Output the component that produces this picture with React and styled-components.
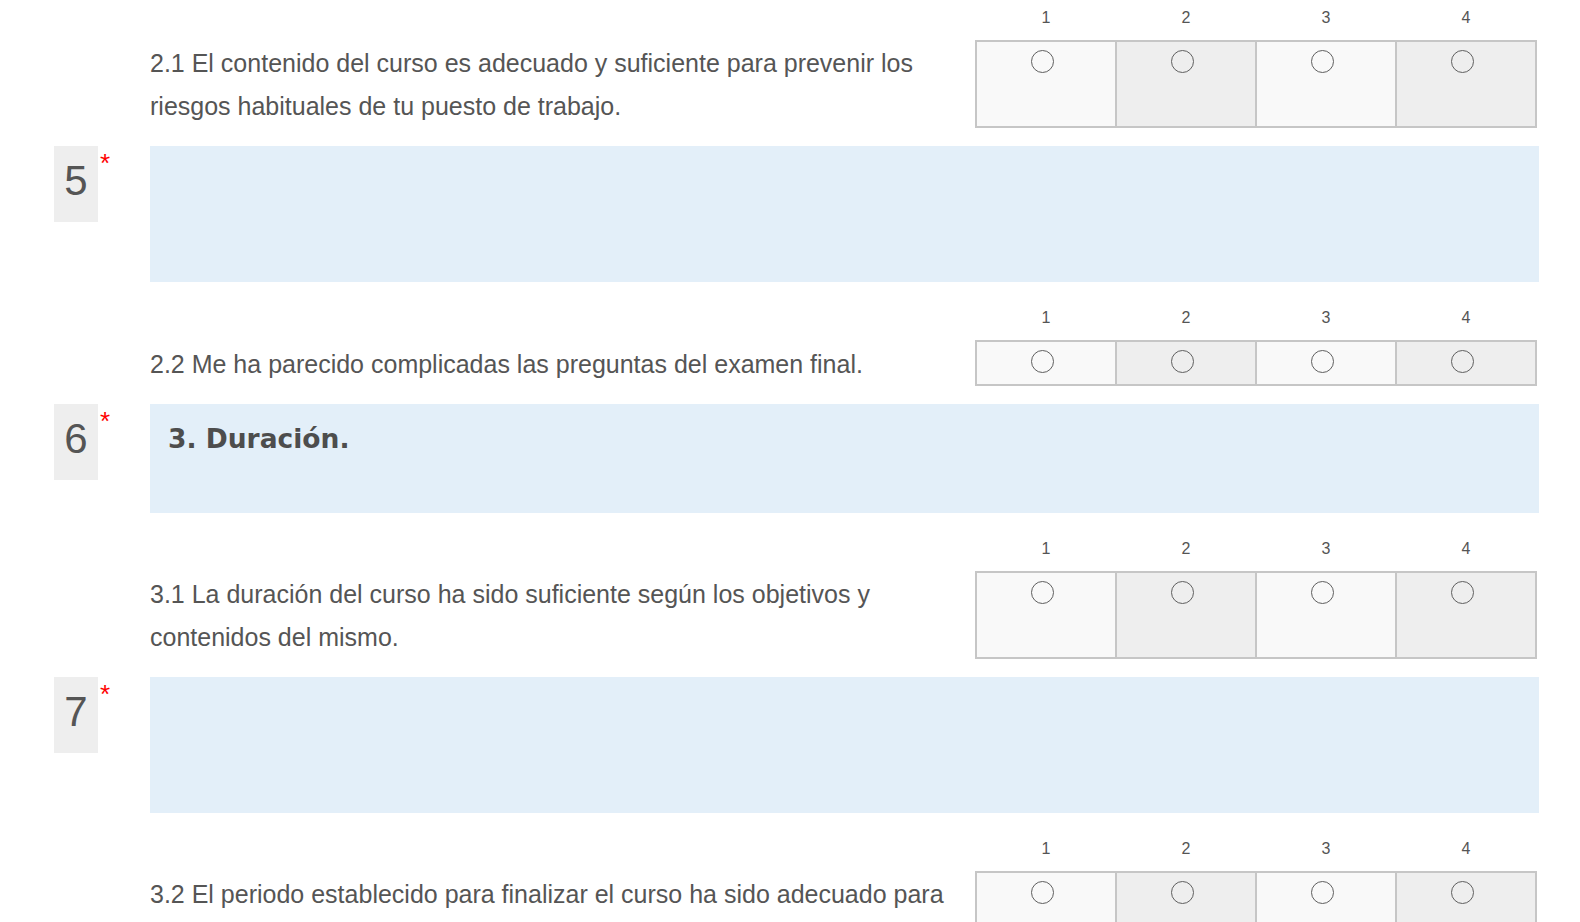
import React from "react";
import styled, { createGlobalStyle } from "styled-components";

const GlobalStyle = createGlobalStyle`
  html, body {
    margin: 0;
    padding: 0;
    background: #ffffff;
    font-family: "Liberation Sans", Arial, sans-serif;
    color: #555555;
  }
`;

const Page = styled.div`
  display: flex;
  flex-direction: column;
  gap: 18px;
  padding-left: 54px;
  width: 1580px;
  height: 922px;
  overflow: hidden;
  box-sizing: border-box;
`;

const Question = styled.div`
  display: flex;
  align-items: flex-start;
`;

const NumberCol = styled.div`
  display: flex;
  align-items: flex-start;
  width: 96px;
  flex-shrink: 0;
`;

const NumberBox = styled.div`
  width: 44px;
  height: 76px;
  background: #eeeeee;
  display: flex;
  justify-content: center;
  padding-top: 11px;
  box-sizing: border-box;
  font-size: 42px;
  line-height: 48px;
  color: #555555;
`;

const Required = styled.span`
  color: #ff0000;
  font-size: 26px;
  line-height: 26px;
  margin: 4px 0 0 2px;
`;

const Content = styled.div`
  display: flex;
  flex-direction: column;
  gap: 18px;
  width: 1389px;
`;

const Intro = styled.div`
  background: #e3eff9;
  height: ${(p) => p.$height}px;
  box-sizing: border-box;
  padding: 18px 18px;
`;

const SectionTitle = styled.h2`
  margin: 0;
  font-family: "DejaVu Sans", Verdana, sans-serif;
  font-size: 26.5px;
  line-height: 34px;
  font-weight: bold;
  color: #4d4d4d;
`;

const SubRow = styled.div`
  display: grid;
  grid-template-columns: 810px 562px;
  grid-template-rows: 40px auto;
  column-gap: 15px;
`;

const Prompt = styled.div`
  grid-column: 1;
  grid-row: 2;
  display: flex;
  align-items: center;
  min-height: 46px;
  padding-top: 2px;
  box-sizing: border-box;
  font-size: 25px;
  line-height: 43px;
  color: #555555;
`;

const ScaleLabels = styled.div`
  grid-column: 2;
  grid-row: 1;
  display: grid;
  grid-template-columns: repeat(4, 1fr);
  column-gap: 2px;
  padding: 8px 2px 0;
  font-size: 16px;
  line-height: 20px;
  text-align: center;
  color: #555555;
`;

const Scale = styled.div`
  grid-column: 2;
  grid-row: 2;
  display: grid;
  grid-template-columns: repeat(4, 1fr);
  border: 2px solid #c6c6c6;
  background: #c6c6c6;
  column-gap: 2px;
`;

const Cell = styled.label`
  display: flex;
  justify-content: center;
  align-items: flex-start;
  padding-top: 8px;
  background: ${(p) => (p.$alt ? "#eeeeee" : "#f9f9f9")};
`;

const Radio = styled.input.attrs({ type: "radio" })`
  appearance: none;
  margin: 0 8px 0 0;
  width: 23px;
  height: 23px;
  border: 1.8px solid #5f5f5f;
  border-radius: 50%;
  background: transparent;
  box-sizing: border-box;
`;

const Row = ({ id, text }) => (
  <SubRow>
    <ScaleLabels>
      {[1, 2, 3, 4].map((n) => (
        <span key={n}>{n}</span>
      ))}
    </ScaleLabels>
    <Prompt>
      <div>{text}</div>
    </Prompt>
    <Scale>
      {[1, 2, 3, 4].map((n) => (
        <Cell key={n} $alt={n % 2 === 0}>
          <Radio name={id} value={n} />
        </Cell>
      ))}
    </Scale>
  </SubRow>
);

const App = () => {
  return (
    <>
      <GlobalStyle />
      <Page>
        <Question>
          <NumberCol />
          <Content>
            <Row
              id="q21"
              text="2.1 El contenido del curso es adecuado y suficiente para prevenir los riesgos habituales de tu puesto de trabajo."
            />
          </Content>
        </Question>

        <Question>
          <NumberCol>
            <NumberBox>5</NumberBox>
            <Required>*</Required>
          </NumberCol>
          <Content>
            <Intro $height={136} />
            <Row
              id="q22"
              text="2.2 Me ha parecido complicadas las preguntas del examen final."
            />
          </Content>
        </Question>

        <Question>
          <NumberCol>
            <NumberBox>6</NumberBox>
            <Required>*</Required>
          </NumberCol>
          <Content>
            <Intro $height={109}>
              <SectionTitle>3. Duración.</SectionTitle>
            </Intro>
            <Row
              id="q31"
              text="3.1 La duración del curso ha sido suficiente según los objetivos y contenidos del mismo."
            />
          </Content>
        </Question>

        <Question>
          <NumberCol>
            <NumberBox>7</NumberBox>
            <Required>*</Required>
          </NumberCol>
          <Content>
            <Intro $height={136} />
            <Row
              id="q32"
              text="3.2 El periodo establecido para finalizar el curso ha sido adecuado para realizarlo correctamente."
            />
          </Content>
        </Question>
      </Page>
    </>
  );
};

export default App;
